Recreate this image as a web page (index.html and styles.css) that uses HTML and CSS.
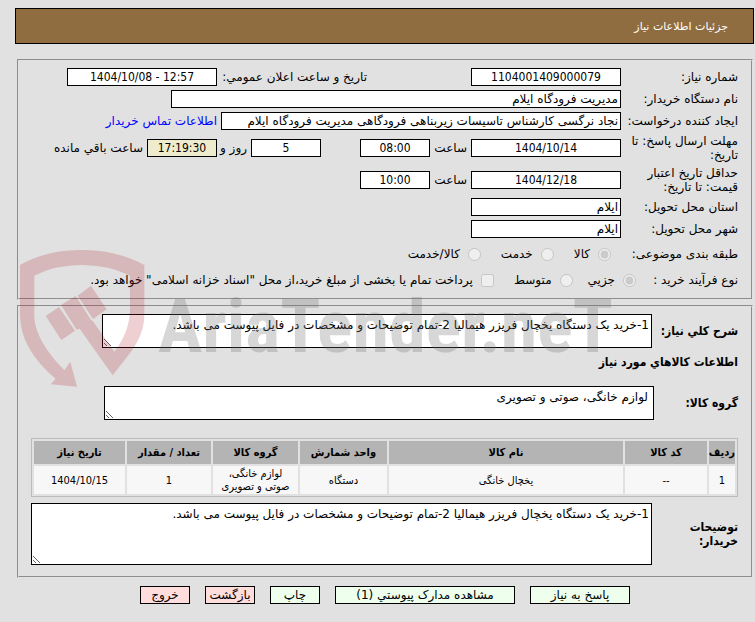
FILE: index.html
```html
<!DOCTYPE html>
<html lang="fa" dir="rtl">
<head>
<meta charset="utf-8">
<title>جزئیات اطلاعات نیاز</title>
<link rel="stylesheet" href="styles.css">
</head>
<body>
<header class="titlebar"><h1>جزئیات اطلاعات نیاز</h1></header>
<main class="content">
  <form>
  <section class="panel info">
    <div class="row">
      <label class="label" for="num">شماره نیاز:</label>
      <input class="field mid w150" id="num" value="1104001409000079" readonly>
      <label class="label-announce" for="ann">تاریخ و ساعت اعلان عمومي:</label>
      <input class="field mid w150" id="ann" dir="ltr" value="1404/10/08 - 12:57" readonly>
    </div>
    <div class="row">
      <label class="label" for="org">نام دستگاه خریدار:</label>
      <input class="field w450" id="org" value="مدیریت فرودگاه ایلام" readonly>
    </div>
    <div class="row">
      <label class="label" for="req">ایجاد کننده درخواست:</label>
      <input class="field w400" id="req" value="نجاد نرگسی کارشناس تاسیسات زیربناهی فرودگاهی مدیریت فرودگاه ایلام" readonly>
      <a class="after" href="#">اطلاعات تماس خریدار</a>
    </div>
    <div class="row tall">
      <label class="label" for="dl">مهلت ارسال پاسخ: تا<br>تاریخ:</label>
      <input class="field mid w150" id="dl" value="1404/10/14" readonly>
      <label class="hour" for="dlh">ساعت</label>
      <input class="field mid w70" id="dlh" value="08:00" readonly>
      <input class="field mid w70 days" id="days" value="5" readonly>
      <label class="and" for="days">روز و</label>
      <input class="field mid w70 timer" id="left" value="17:19:30" readonly>
      <label class="after" for="left">ساعت باقي مانده</label>
    </div>
    <div class="row tall">
      <label class="label" for="cr">حداقل تاریخ اعتبار<br>قیمت: تا تاریخ:</label>
      <input class="field mid w150" id="cr" value="1404/12/18" readonly>
      <label class="hour" for="crh">ساعت</label>
      <input class="field mid w70" id="crh" value="10:00" readonly>
    </div>
    <div class="row">
      <label class="label" for="prov">استان محل تحویل:</label>
      <input class="field w150" id="prov" value="ایلام" readonly>
    </div>
    <div class="row">
      <label class="label" for="city">شهر محل تحویل:</label>
      <input class="field w150" id="city" value="ایلام" readonly>
    </div>
    <div class="row options">
      <span class="label">طبقه بندی موضوعی:</span>
      <div class="choices subject">
        <label><input type="radio" name="subject" checked disabled>کالا</label>
        <label><input type="radio" name="subject" disabled>خدمت</label>
        <label><input type="radio" name="subject" disabled>کالا/خدمت</label>
      </div>
    </div>
    <div class="row options">
      <span class="label short">نوع فرآیند خرید :</span>
      <div class="choices process">
        <label><input type="radio" name="process" checked disabled>جزیي</label>
        <label><input type="radio" name="process" disabled>متوسط</label>
        <label class="treasury"><input type="checkbox" disabled>پرداخت تمام یا بخشی از مبلغ خرید،از محل "اسناد خزانه اسلامی" خواهد بود.</label>
      </div>
    </div>
  </section>

  <section class="panel goods">
    <div class="block">
      <label class="caption" for="desc">شرح کلي نیاز:</label>
      <textarea class="area" id="desc" readonly>1-خرید یک دستگاه یخچال فریزر هیمالیا 2-تمام توضیحات و مشخصات در فایل پیوست می باشد.</textarea>
    </div>
    <h2>اطلاعات کالاهاي مورد نیاز</h2>
    <div class="block">
      <label class="caption group" for="grp">گروه کالا:</label>
      <textarea class="area padded" id="grp" readonly>لوازم خانگی، صوتی و تصویری</textarea>
    </div>
    <table class="items">
      <colgroup><col class="c-row"><col class="c-code"><col><col class="c-unit"><col class="c-group"><col class="c-qty"><col class="c-date"></colgroup>
      <thead><tr><th>ردیف</th><th>کد کالا</th><th>نام کالا</th><th>واحد شمارش</th><th>گروه کالا</th><th>تعداد / مقدار</th><th>تاریخ نیاز</th></tr></thead>
      <tbody><tr><td>1</td><td>--</td><td>یخچال خانگی</td><td>دستگاه</td><td>لوازم خانگی،<br>صوتی و تصویری</td><td>1</td><td dir="ltr">1404/10/15</td></tr></tbody>
    </table>
    <div class="block">
      <label class="caption" for="notes">توضیحات<br>خریدار:</label>
      <textarea class="area notes" id="notes" readonly>1-خرید یک دستگاه یخچال فریزر هیمالیا 2-تمام توضیحات و مشخصات در فایل پیوست می باشد.</textarea>
    </div>
  </section>

  <div class="actions">
    <button type="button" class="btn wide">پاسخ به نیاز</button>
    <button type="button" class="btn widest">مشاهده مدارک پیوستي (1)</button>
    <button type="button" class="btn">چاپ</button>
    <button type="button" class="btn red">بازگشت</button>
    <button type="button" class="btn red">خروج</button>
  </div>
  </form>
</main>
<svg class="watermark" viewBox="0 0 600 150" aria-hidden="true">
  <g class="shield" transform="scale(.33333)">
    <path d="M60 75Q145 28 245 30Q345 28 433 75V225Q433 285 385 346L338 406L239 266L230 269L183 195L227 168L273 240L279 244L343 335Q390 275 390 205V107Q325 75 245 75Q165 75 103 107V230Q105 300 193 391L211 365L231 440L152 433L167 417Q60 325 60 225Z"/>
    <path d="M137 228L177 201L225 272L184 300Z"/>
    <path d="M233 167L273 137L320 208L279 237Z"/>
  </g>
  <text class="word" x="158" y="112" direction="ltr">AriaTender.neT</text>
</svg>
</body>
</html>
```
FILE: styles.css
```css
* { box-sizing: border-box; }
body {
  margin: 0;
  padding: 8px 1px 16px 15px;
  position: relative;
  background: #e1e1e1;
  color: #000;
  font: 12px/14px "DejaVu Sans", sans-serif;
}
.titlebar {
  height: 36px;
  border: 1px solid #000;
  background: #8f6d40;
  color: #fff;
  display: flex;
  align-items: center;
  padding: 2px 25px 0;
}
h1 { margin: 0; font-size: 11px; font-weight: normal; }
.content { padding: 15px 1px 0 2px; }
.panel { border: 2px groove #e1e1e1; }
.info { padding: 5px 13px 6px; margin-bottom: 5px; }
.row { display: flex; align-items: center; height: 22px; white-space: nowrap; }
.row.tall { height: 32px; }
.row.options { height: 26px; padding-top: 2px; }
.label { width: 117px; flex: none; }
.label.short { width: 102px; }
.field {
  height: 18px;
  margin: 0;
  padding: 0 2px;
  border: 1px solid #000;
  background: #fff;
  color: #000;
  font: inherit;
  border-radius: 0;
}
.field.mid { text-align: center; font-family: "DejaVu Sans Condensed", "DejaVu Sans", sans-serif; }
.w70 { width: 70px; }
.w150 { width: 150px; }
.w400 { width: 400px; }
.w450 { width: 450px; }
.label-announce { margin-right: 104px; width: 150px; }
.hour { width: 41px; padding-right: 4px; }
.and { width: 34px; padding-right: 4px; }
.after { padding-right: 4px; }
.days { margin-right: 39px; }
.timer { background: #eeeccc; }
a { color: #00f; text-decoration: none; }
.choices { display: flex; align-items: center; }
.choices label { display: flex; align-items: center; }
.choices input { width: 13px; height: 13px; margin: 0 0 0 8px; }
.subject { gap: 20px; padding-right: 10px; }
.process { gap: 15px; }
.choices .treasury { margin-right: 5px; }
.goods { padding: 7px 13px 11px 12px; }
.block { display: flex; justify-content: space-between; align-items: center; }
.caption, h2 { font: bold 12px/14px "DejaVu Sans Condensed", "DejaVu Sans", sans-serif; }
.caption { width: 86px; flex: none; }
.caption.group { width: 84px; }
h2 { margin: 7px 0 17px; }
.area {
  display: block;
  width: 550px;
  height: 34px;
  margin: 0 0 0 auto;
  padding: 2px;
  border: 1px solid #000;
  background: #fff;
  color: #000;
  font: 12px/16px "DejaVu Sans", sans-serif;
}
.area.padded { padding: 2px 5px; }
.area.notes { flex: 1; height: 62px; }
.items {
  width: 100%;
  margin: 18px 0 6px;
  table-layout: fixed;
  border: 1px solid #bbb;
  border-spacing: 2px;
  font: 11px/13px "DejaVu Sans Condensed", "DejaVu Sans", sans-serif;
}
.items th, .items td { padding: 0; text-align: center; }
.items th { height: 23px; background: #b4b4b4; }
.items td { height: 28px; background: #f7f7f7; }
.c-row { width: 26px; }
.c-code { width: 82px; }
.c-unit { width: 87px; }
.c-group { width: 85px; }
.c-qty { width: 84px; }
.c-date { width: 91px; }
.actions { display: flex; justify-content: center; gap: 15px; margin-top: 8px; }
.btn {
  width: 50px;
  height: 18px;
  padding: 0;
  border: 1px solid #000;
  background: #efe;
  color: #000;
  font: 12px/14px "DejaVu Sans", sans-serif;
  white-space: nowrap;
}
.wide { width: 100px; }
.widest { width: 180px; }
.red { background: #fdd; }
.watermark {
  position: absolute;
  left: 0;
  top: 240px;
  width: 600px;
  height: 150px;
  overflow: visible;
  pointer-events: none;
}
.shield { fill: rgb(170 20 30 / .2); }
.word { font: bold 74px "Roboto Condensed", "Open Sans Condensed", Roboto, sans-serif; fill: rgb(110 110 110 / .28); }
```
